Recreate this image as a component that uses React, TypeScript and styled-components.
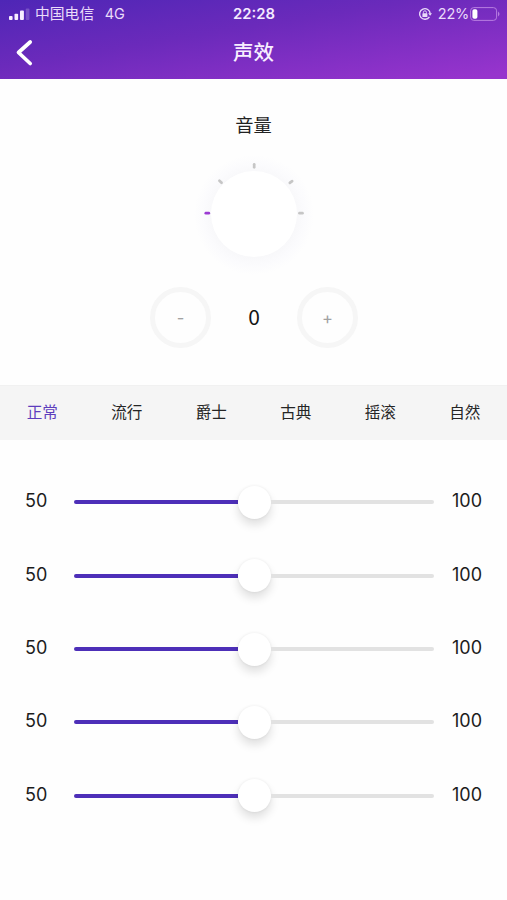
import React from "react";
import styled, { createGlobalStyle } from "styled-components";

const GlobalStyle = createGlobalStyle`
  * { box-sizing: border-box; }
  body {
    margin: 0;
    background: #fefefe;
    font-family: Inter, "Noto Sans CJK SC", sans-serif;
    color: #1c1c1c;
  }
  button { font: inherit; color: inherit; border: 0; background: none; padding: 0; }
`;

const Screen = styled.main`
  width: 507px;
  height: 900px;
  display: flex;
  flex-direction: column;
  overflow: hidden;
`;

const Header = styled.header`
  height: 79px;
  background: linear-gradient(171deg, #4e26b6 0%, #6b2abb 42%, #9734cd 96%);
  color: #f8efff;
`;

const StatusBar = styled.div`
  height: 27px;
  display: grid;
  grid-template-columns: 1fr auto 1fr;
  align-items: center;
  padding: 1px 7px 0 9px;
  font-size: 14.5px;
  line-height: 26px;
  color: #eadbfa;
`;

const Carrier = styled.div`
  display: flex;
  align-items: center;
`;

const CarrierName = styled.span`
  margin: 0 10.5px 0 5px;
  font-size: 14.8px;
`;

const Clock = styled.time`
  font-size: 14.8px;
  font-weight: 600;
  letter-spacing: 0;
  margin-right: 1px;
  color: #f5eaff;
`;

const Power = styled.div`
  display: flex;
  justify-content: flex-end;
  align-items: center;
`;

const Percent = styled.span`
  margin: 0 1px 0 6px;
  letter-spacing: -0.25px;
`;

const NavBar = styled.nav`
  height: 52px;
  display: grid;
  grid-template-columns: 60px 1fr 60px;
  align-items: center;
`;

const BackButton = styled.button`
  display: flex;
  padding-left: 15px;
`;

const Title = styled.h1`
  margin: 0;
  font-size: 20.5px;
  line-height: 50px;
  font-weight: 500;
  text-align: center;
`;

const VolumePanel = styled.section`
  height: 306px;
  display: flex;
  flex-direction: column;
  align-items: center;
  padding-top: 31px;
`;

const VolumeLabel = styled.h2`
  margin: 0;
  font-size: 18.3px;
  line-height: 31px;
  font-weight: 400;
  color: #222;
`;

const Dial = styled.svg`
  display: block;
  width: 130px;
  height: 130px;
  margin-top: 8px;
`;

const Stepper = styled.div`
  display: grid;
  grid-template-columns: 61px 86px 61px;
  align-items: center;
  margin-top: 8px;
  margin-left: 1px;
`;

const StepButton = styled.button`
  width: 61px;
  height: 61px;
  border: 5px solid #f6f6f6;
  border-radius: 50%;
  display: flex;
  align-items: center;
  justify-content: center;
  font-size: 16.5px;
  line-height: 20px;
  color: #a2a2a2;
`;

const VolumeValue = styled.output`
  text-align: center;
  font-family: "Noto Sans CJK SC", sans-serif;
  font-size: 21px;
  line-height: 30px;
  padding-bottom: 3px;
  color: #151515;
`;

const Tabs = styled.div`
  height: 55px;
  display: grid;
  grid-template-columns: repeat(6, 1fr);
  background: #f5f5f5;
  border-top: 1px solid #f1f1f1;
`;

const Tab = styled.button<{ $active: boolean }>`
  font-size: 15.6px;
  line-height: 54px;
  color: ${({ $active }) => ($active ? "#5d3dbd" : "#252525")};
`;

const Equalizer = styled.section`
  padding: 25.7px 25px 0 25px;
`;

const Band = styled.div`
  height: 73.35px;
  display: grid;
  grid-template-columns: 49px 360px 1fr;
  align-items: center;
`;

const BandValue = styled.span<{ $end?: boolean }>`
  font-size: 18px;
  line-height: 24px;
  margin-top: -2px;
  text-align: ${({ $end }) => ($end ? "right" : "left")};
`;

const Track = styled.div`
  height: 34px;
  display: grid;
  grid-template-columns: 1fr 33px 1fr;
  align-items: center;
`;

const Rail = styled.div<{ $filled?: boolean }>`
  height: 4px;
  border-radius: ${({ $filled }) => ($filled ? "2px 0 0 2px" : "0 2px 2px 0")};
  background: ${({ $filled }) => ($filled ? "#4d2fb8" : "#e2e2e2")};
`;

const Thumb = styled.div`
  width: 33px;
  height: 33px;
  border-radius: 50%;
  background: #fff;
  box-shadow: 0 6px 10px rgba(0, 0, 0, 0.12), 0 0 3px rgba(0, 0, 0, 0.07);
`;

const ticks = [
  { x: 18.3, y: 64.2, angle: 90, color: "#9b3bd2" },
  { x: 31.5, y: 32.7, angle: -46, color: "#c6c6c6" },
  { x: 65.2, y: 16.8, angle: 0, color: "#c6c6c6" },
  { x: 102, y: 33, angle: 52, color: "#c6c6c6" },
  { x: 112, y: 64.2, angle: 90, color: "#c6c6c6" },
];

const presets = ["正常", "流行", "爵士", "古典", "摇滚", "自然"];
const bands = [0, 1, 2, 3, 4];

function SignalIcon() {
  return (
    <svg width="21" height="13" viewBox="0 0 21 13">
      <g fill="#f8efff">
        <rect x="0" y="8" width="3.6" height="4" rx="0.9" />
        <rect x="5.5" y="5.7" width="3.6" height="6.3" rx="0.9" />
        <rect x="11" y="2.5" width="3.9" height="9.5" rx="0.9" />
        <rect x="16.8" y="0.5" width="3.6" height="11.5" rx="0.9" opacity="0.22" />
      </g>
    </svg>
  );
}

function RotationLockIcon() {
  return (
    <svg width="14" height="14" viewBox="0 0 14 14" fill="none" stroke="#eadbfa">
      <path d="M11.4 9.8A5.3 5.3 0 1 1 12.2 6.6" strokeWidth="1.4" />
      <path d="M10.2 6.2H14L12.1 8.8Z" fill="#eadbfa" stroke="none" />
      <rect x="4.4" y="6.3" width="5" height="3.7" rx="0.6" fill="#eadbfa" stroke="none" />
      <path d="M5.4 6.5V5.3a1.5 1.5 0 0 1 3 0V6.5" strokeWidth="0.9" />
    </svg>
  );
}

function BatteryIcon() {
  return (
    <svg width="30" height="14" viewBox="0 0 30 14">
      <rect x="0.6" y="0.6" width="26" height="12.8" rx="3.2" fill="none" stroke="#b77de0" strokeWidth="1" />
      <rect x="2.4" y="2.3" width="5" height="9.4" rx="1.8" fill="#fff" />
      <path d="M28 4.5Q31 7 28 9.5Z" fill="#b77de0" />
    </svg>
  );
}

export default function App() {
  return (
    <>
      <GlobalStyle />
      <Screen>
        <Header>
          <StatusBar>
            <Carrier>
              <SignalIcon />
              <CarrierName>中国电信</CarrierName>
              <span>4G</span>
            </Carrier>
            <Clock>22:28</Clock>
            <Power>
              <RotationLockIcon />
              <Percent>22%</Percent>
              <BatteryIcon />
            </Power>
          </StatusBar>
          <NavBar>
            <BackButton aria-label="返回">
              <svg width="20" height="28" viewBox="0 0 20 28">
                <path d="M15.2 3 3.5 13.5 15.2 24.5" fill="none" stroke="#fff" strokeWidth="3.7" strokeLinecap="round" strokeLinejoin="round" />
              </svg>
            </BackButton>
            <Title>声效</Title>
          </NavBar>
        </Header>

        <VolumePanel>
          <VolumeLabel>音量</VolumeLabel>
          <Dial viewBox="0 0 130 130">
            <defs>
              <radialGradient id="halo">
                <stop offset="0.7" stopColor="#f8f8fa" />
                <stop offset="0.84" stopColor="#fbfbfd" />
                <stop offset="1" stopColor="#fefefe" />
              </radialGradient>
            </defs>
            <circle cx="65" cy="66" r="60" fill="url(#halo)" />
            <circle cx="65" cy="65" r="43" fill="#fff" />
            {ticks.map(({ x, y, angle, color }) => (
              <path
                key={x}
                d="M0 -1.5V1.5"
                stroke={color}
                strokeWidth="2.7"
                strokeLinecap="round"
                transform={`translate(${x} ${y}) rotate(${angle})`}
              />
            ))}
          </Dial>
          <Stepper>
            <StepButton>-</StepButton>
            <VolumeValue>0</VolumeValue>
            <StepButton>+</StepButton>
          </Stepper>
        </VolumePanel>

        <Tabs>
          {presets.map((name, i) => (
            <Tab key={name} $active={i === 0}>{name}</Tab>
          ))}
        </Tabs>

        <Equalizer>
          {bands.map((band) => (
            <Band key={band}>
              <BandValue>50</BandValue>
              <Track>
                <Rail $filled />
                <Thumb />
                <Rail />
              </Track>
              <BandValue $end>100</BandValue>
            </Band>
          ))}
        </Equalizer>
      </Screen>
    </>
  );
}
